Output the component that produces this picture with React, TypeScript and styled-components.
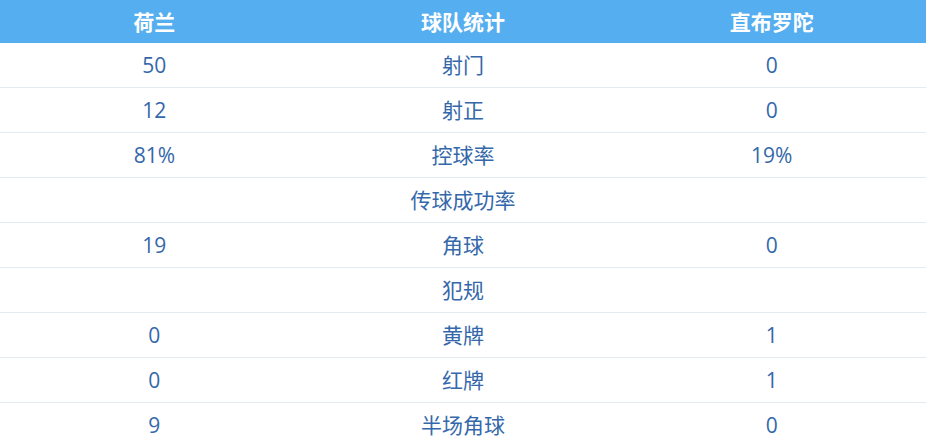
import styled, { createGlobalStyle } from "styled-components";

const GlobalStyle = createGlobalStyle`
  body {
    margin: 0;
    background: #ffffff;
    font-family: "Open Sans", "Noto Sans CJK SC", sans-serif;
  }
`

const Table = styled.div`
  width: 926px;
  display: flex;
  flex-direction: column;
`

const HeaderRow = styled.div`
  display: grid;
  grid-template-columns: repeat(3, 1fr);
  height: 43px;
  align-items: center;
  background: #55aeef;
  color: #ffffff;
  font-size: 21px;
  font-weight: bold;
  text-align: center;
`

const Row = styled.div`
  display: grid;
  grid-template-columns: repeat(3, 1fr);
  height: 44px;
  align-items: center;
  border-bottom: 1px solid #e3ebf1;
  color: #3468aa;
  font-size: 21px;
  text-align: center;
`

const Cell = styled.div`
  line-height: 44px;
`

type StatType = {
  home: string
  name: string
  away: string
}

const stats: StatType[] = [
  { home: "50", name: "射门", away: "0" },
  { home: "12", name: "射正", away: "0" },
  { home: "81%", name: "控球率", away: "19%" },
  { home: "", name: "传球成功率", away: "" },
  { home: "19", name: "角球", away: "0" },
  { home: "", name: "犯规", away: "" },
  { home: "0", name: "黄牌", away: "1" },
  { home: "0", name: "红牌", away: "1" },
  { home: "9", name: "半场角球", away: "0" },
]

const App = () => {
  return (
    <>
      <GlobalStyle />
      <Table>
        <HeaderRow>
          <Cell>荷兰</Cell>
          <Cell>球队统计</Cell>
          <Cell>直布罗陀</Cell>
        </HeaderRow>
        {stats.map((stat, index) => (
          <Row key={index}>
            <Cell>{stat.home}</Cell>
            <Cell>{stat.name}</Cell>
            <Cell>{stat.away}</Cell>
          </Row>
        ))}
      </Table>
    </>
  );
}

export default App;
